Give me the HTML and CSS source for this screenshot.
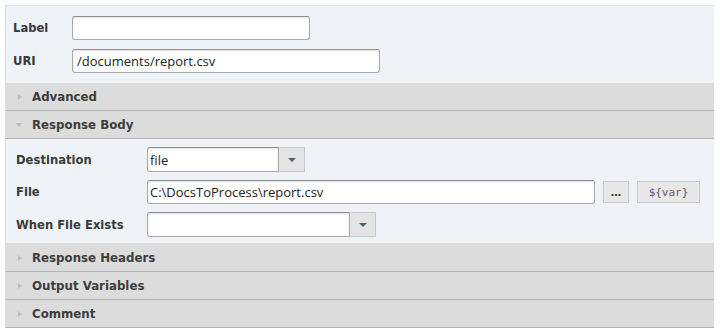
FILE: index.html
```html
<!DOCTYPE html>
<html>

<head>
    <link rel="stylesheet" href="styles.css">
</head>

<body>
    <div class="panel">
        <div class="general">
            <div class="row">
                <label class="lbl">Label</label>
                <input type="text" class="text" id="label" />
            </div>
            <div class="row">
                <label class="lbl">URI</label>
                <input type="text" class="text" id="uri" value="/documents/report.csv" />
            </div>
        </div>

        <div class="section-head">Advanced</div>
        <div class="section-head open">Response Body</div>
        <div class="section-body">
            <div class="row">
                <label class="lbl wide">Destination</label>
                <div class="combo">
                    <input type="text" class="text combo-input" id="destination" value="file" />
                    <button type="button" class="combo-btn"><span class="arrow"></span></button>
                </div>
            </div>
            <div class="row">
                <label class="lbl wide">File</label>
                <input type="text" class="text" id="file" value="C:\DocsToProcess\report.csv" />
                <button type="button" class="small-btn browse">...</button>
                <button type="button" class="small-btn var">${var}</button>
            </div>
            <div class="row">
                <label class="lbl wide">When File Exists</label>
                <div class="combo">
                    <input type="text" class="text combo-input" id="whenExists" />
                    <button type="button" class="combo-btn"><span class="arrow"></span></button>
                </div>
            </div>
        </div>
        <div class="section-head">Response Headers</div>
        <div class="section-head">Output Variables</div>
        <div class="section-head">Comment</div>
    </div>
</body>

</html>
```

FILE: styles.css
```css
body {
    margin: 0;
    padding: 0;
    background-color: #fff;
    font-family: "DejaVu Sans", Verdana, sans-serif;
    color: #3a3a3a;
}

.panel {
    margin: 5px 6px 0 5px;
    border-top: 1px solid #dcdfe3;
    border-left: 1px solid #dcdfe3;
    background-color: #eff3f8;
}

.general {
    display: flex;
    flex-direction: column;
    gap: 9px;
    padding: 10px 0 10px 7px;
}

.row {
    display: flex;
    align-items: center;
}

.lbl {
    font-size: 11.6px;
    font-weight: bold;
    width: 59px;
}

.lbl.wide {
    width: 131px;
}

.text {
    height: 24px;
    box-sizing: border-box;
    border: 1px solid #a9a9a9;
    border-top-color: #8e8e8e;
    border-radius: 3px;
    box-shadow: inset 0 1px 2px rgba(0, 0, 0, 0.12);
    background-color: #fff;
    font-family: "Open Sans", sans-serif;
    font-size: 13px;
    color: #222;
    padding: 0 4px;
    margin: 0;
    outline: none;
}

#label {
    width: 238px;
}

#uri {
    width: 308px;
}

.section-head {
    height: 27px;
    border-bottom: 1px solid #b4b4b4;
    background-color: #dcdcdc;
    display: flex;
    align-items: center;
    padding-left: 26px;
    font-size: 11.8px;
    font-weight: bold;
    color: #3d3d3d;
    position: relative;
}

.section-head::before {
    content: "";
    position: absolute;
    left: 12px;
    top: 11px;
    border-style: solid;
    border-width: 3.5px 0 3.5px 4px;
    border-color: transparent transparent transparent #bdbdbd;
}

.section-head.open::before {
    left: 10px;
    top: 12px;
    border-width: 4px 3.5px 0 3.5px;
    border-color: #bdbdbd transparent transparent transparent;
}

.section-body {
    display: flex;
    flex-direction: column;
    gap: 8px;
    padding: 8px 0 6px 10px;
    border-bottom: 1px solid #dcdcdc;
}

.section-body .text {
    padding-left: 2px;
}

.combo {
    display: flex;
    height: 25px;
}

.combo-input {
    height: 25px;
    border-radius: 3px 0 0 3px;
}

#destination {
    width: 132px;
}

#whenExists {
    width: 203px;
}

.combo-btn {
    width: 26px;
    height: 25px;
    box-sizing: border-box;
    border: 1px solid #c9c9c9;
    border-left: none;
    background-color: #e4e4e4;
    padding: 0;
    display: flex;
    align-items: center;
    justify-content: center;
}

.arrow {
    border-style: solid;
    border-width: 4px 4px 0 4px;
    border-color: #4f6272 transparent transparent transparent;
}

#file {
    width: 448px;
}

.small-btn {
    height: 22px;
    box-sizing: border-box;
    border: 1px solid #c8c8c8;
    background-color: #e8e8e8;
    padding: 0;
    margin-left: 8px;
    font-family: "Open Sans", sans-serif;
    font-size: 12px;
    color: #222;
}

.browse {
    width: 26px;
    font-weight: bold;
    line-height: 14px;
}

.var {
    width: 63px;
    margin-left: 8px;
    color: #6b5876;
    font-family: "DejaVu Sans Mono", monospace;
    font-size: 11px;
}
```
